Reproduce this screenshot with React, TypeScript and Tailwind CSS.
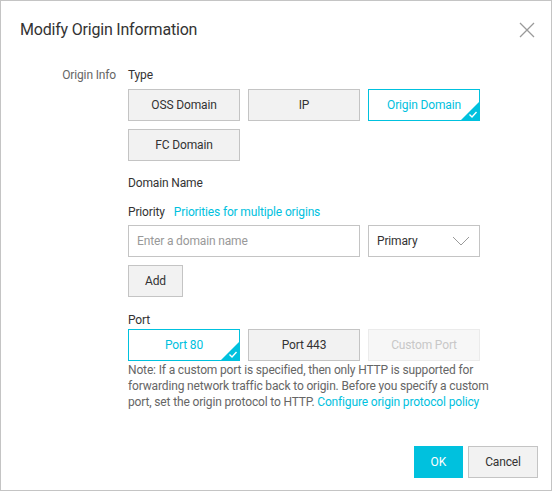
import React from "react";

const font = { fontFamily: "Roboto, 'Liberation Sans', sans-serif" };

function CornerCheck() {
  return (
    <svg className="absolute right-0 bottom-0" width="18" height="18" viewBox="0 0 18 18">
      <polygon points="18,0 18,18 0,18" fill="#00c1de" />
      <polyline points="8.5,12.5 11,15 15.5,10" fill="none" stroke="#ffffff" strokeWidth="1.4" />
    </svg>
  );
}

function Choice({ label, selected, disabled, className = "w-[112px]" }: { label: string; selected?: boolean; disabled?: boolean; className?: string }) {
  if (selected) {
    return (
      <div className={`relative h-8 ${className} border border-[#00c1de] bg-white text-[#00c1de] flex items-center justify-center text-xs tracking-[-0.15px] overflow-hidden`}>
        {label}
        <CornerCheck />
      </div>
    );
  }
  if (disabled) {
    return (
      <div className={`h-8 ${className} border border-[#ebebeb] bg-[#f7f7f7] text-[#c8c8c8] flex items-center justify-center text-xs tracking-[-0.15px]`}>
        {label}
      </div>
    );
  }
  return (
    <div className={`h-8 ${className} border border-[#c4c4c4] bg-[#f2f2f2] text-[#333] flex items-center justify-center text-xs tracking-[-0.15px]`}>
      {label}
    </div>
  );
}

export default function App() {
  return (
    <div style={font} className="w-[553px] h-[493px] bg-white">
      <div className="w-[552px] h-[491px] border border-[#c4c4c4] flex flex-col">
        {/* header */}
        <div className="flex items-center justify-between pl-[19px] pr-[16px] pt-[17px]">
          <div className="text-[16px] leading-6 tracking-[-0.2px] text-[#333]">Modify Origin Information</div>
          <svg width="16" height="16" viewBox="0 0 16 16" className="-mt-[1px]">
            <path d="M1 1 L15 15 M15 1 L1 15" stroke="#9a9a9a" strokeWidth="1.3" fill="none" />
          </svg>
        </div>

        {/* body */}
        <div className="flex mt-[22px] text-xs tracking-[-0.15px]">
          <div className="w-[115px] text-right leading-5 text-[#666] mt-[1px]">Origin Info</div>
          <div className="ml-[12px] flex flex-col">
            <div className="leading-5 text-[#333] mt-[1px]">Type</div>
            <div className="mt-[4px] grid grid-cols-[112px_112px_112px] gap-2">
              <Choice label="OSS Domain" />
              <Choice label="IP" />
              <Choice label="Origin Domain" selected />
              <Choice label="FC Domain" />
            </div>

            <div className="mt-[12px] leading-5 text-[#333]">Domain Name</div>
            <div className="mt-[9px] leading-5 text-[#333] flex gap-[9px]">
              <span>Priority</span>
              <span className="text-[#00c1de]">Priorities for multiple origins</span>
            </div>

            <div className="mt-[3px] flex gap-2">
              <div className="h-8 w-[232px] border border-[#c4c4c4] flex items-center px-[8px] text-[#999]">
                Enter a domain name
              </div>
              <div className="h-8 w-[112px] border border-[#c4c4c4] flex items-center justify-between pl-[8px] pr-[9px] text-[#333]">
                <span>Primary</span>
                <svg width="18" height="10" viewBox="0 0 18 10">
                  <polyline points="1,1 9,9 17,1" fill="none" stroke="#9a9a9a" strokeWidth="1" />
                </svg>
              </div>
            </div>

            <div className="mt-2">
              <Choice label="Add" className="w-[55px]" />
            </div>

            <div className="mt-[15px] leading-4 text-[#333]">Port</div>
            <div className="mt-[1px] flex gap-2">
              <Choice label="Port 80" selected />
              <Choice label="Port 443" />
              <Choice label="Custom Port" disabled />
            </div>

            <div className="mt-[1px] w-[380px] leading-4 text-[#666]">
              Note: If a custom port is specified, then only HTTP is supported for
              <br />
              forwarding network traffic back to origin. Before you specify a custom
              <br />
              port, set the origin protocol to HTTP.{" "}
              <span className="text-[#00c1de]">Configure origin protocol policy</span>
            </div>
          </div>
        </div>

        {/* footer */}
        <div className="mt-auto flex justify-end gap-[5px] pr-[13px] pb-[12px]">
          <div className="h-8 w-[49px] bg-[#00c1de] text-white text-xs flex items-center justify-center">OK</div>
          <div className="h-8 w-[70px] border border-[#c4c4c4] bg-[#f2f2f2] text-[#333] text-xs tracking-[-0.15px] flex items-center justify-center">Cancel</div>
        </div>
      </div>
    </div>
  );
}
